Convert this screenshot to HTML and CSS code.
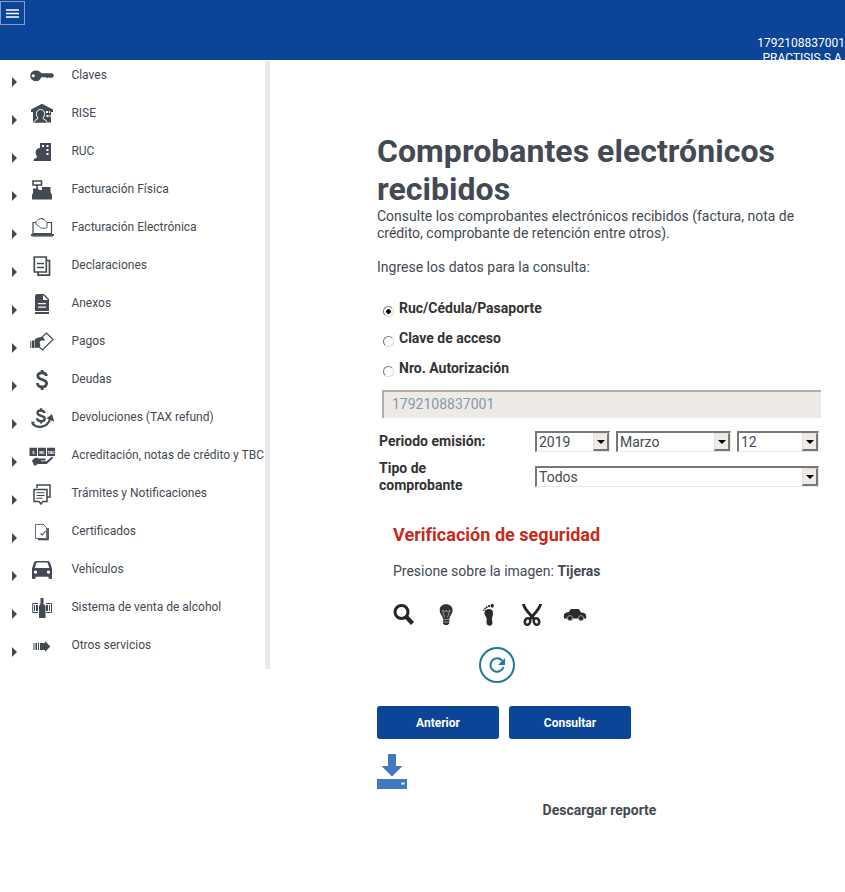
FILE: index.html
```html
<!DOCTYPE html>
<html lang="es">
<head>
<meta charset="utf-8">
<title>Comprobantes electrónicos recibidos</title>
<link rel="stylesheet" href="styles.css">
</head>
<body>
<header class="topbar">
  <button class="menu-button" aria-label="Menú"><svg width="13" height="9" viewBox="0 0 13 9"><path d="M0 1h13M0 4.500h13M0 8h13" stroke="#fff" stroke-width="1.500"/></svg></button>
  <div class="account"><div>1792108837001</div><div class="company">PRACTISIS S.A.</div></div>
</header>
<div class="layout">
<nav class="sidebar">
  <a class="item"><i class="caret"></i><svg class="icon" viewBox="0 0 28 28"><path fill-rule="evenodd" d="M8 8.500c2.500 0 4.300 1 5.200 2.700H24.500l1.500 2.300-1.500 2.500-1.300-.8-1.200 1-1.300-1-1.300 1-1.400-1h-4.800C12.300 18 10.500 19.200 8 19.200c-3.500 0-5.700-2.400-5.700-5.400S4.500 8.500 8 8.500zM5.300 12.200a1.600 1.600 0 1 0 .01 0z"/></svg><span>Claves</span></a>
  <a class="item"><i class="caret"></i><svg class="icon" viewBox="0 0 28 28"><path d="M14 3.700 3 9.500v2.500h2V22.500h18V12h2V9.500z"/><path d="M6 22.500c0-3 4-2.500 4-4.500-3.500-4.500-1-8.500 2.500-8.500s6 4 2.500 8.500c0 2 4 1.500 4 4.500" stroke="#fff" fill="#434a54"/><path d="M18 11h2v2h-2zM21 11h1v2h-1zM18.500 15h2v2h-2zM21.500 15h1v2h-1z" fill="#fff"/></svg><span>RISE</span></a>
  <a class="item"><i class="caret"></i><svg class="icon" viewBox="0 0 28 28"><path d="M12 5h11v18H12z"/><path d="M14 7h2v2h-2zM18.500 7h2v2h-2zM18.500 11h2v2h-2zM18.500 15h2v2h-2z" fill="#fff"/><path d="M5.500 23c0-3 3.500-2.500 3.500-4.500-3-4-.5-8.500 2.500-8.500s5.500 4.500 2.500 8.500c0 2 5 1.500 5 4.500z"/></svg><span>RUC</span></a>
  <a class="item"><i class="caret"></i><svg class="icon" viewBox="0 0 28 28"><path d="M5 5h8.500v4H5zM9 9v4" fill="none" stroke="#434a54" stroke-width="1.600"/><path d="M5 12.500h5L11 14h3v-3h8.500v5l1.500 3v4.500H4V19l1-2z"/></svg><span>Facturación Física</span></a>
  <a class="item"><i class="caret"></i><svg class="icon" viewBox="0 0 28 28"><path d="M8 8.500H5V19.500h18.500v-11H19" fill="none" stroke="#434a54" stroke-width="1.200"/><path d="M8 10c-1-3 3-6 7-5.500l4 4v5c0 1-6 1-7 0-1-2-3-2-4-3.500zM13 4.500l3 1" fill="#fff" stroke="#434a54" stroke-width=".9"/><path d="M3 20h23v1.500L24 23H5l-2-1.500z"/><path d="M4 22.300h21" stroke="#a3a7ac"/></svg><span>Facturación Electrónica</span></a>
  <a class="item"><i class="caret"></i><svg class="icon" viewBox="0 0 28 28"><g fill="none" stroke="#434a54" stroke-width="1.700"><path d="M6.300 5h12v15h-12zM9 11.500h7M9 15.500h7"/><path d="M19 8.500h2.500V23.200H10V20"/></g></svg><span>Declaraciones</span></a>
  <a class="item"><i class="caret"></i><svg class="icon" viewBox="0 0 28 28"><path d="M8.500 4H16l5 5v12H7V5.500z"/><path d="M15 5v5h5M10 13h8v1.300h-8zM10 16.500h8v1.300h-8z" fill="#fff"/><path d="M7 22h14v2H7z"/></svg><span>Anexos</span></a>
  <a class="item"><i class="caret"></i><svg class="icon" viewBox="0 0 28 28"><path d="m12 11 6.500-6 6.500 6.500L14.500 22l-4.500-4" fill="none" stroke="#434a54" stroke-width="1.200"/><path d="M2.300 13h1v7h-1zM4 12.500h2V20H4zM6.500 12c2-2.500 4.500-3 7-2.700 2.200 0 3.500 1.500 3 3.700-2-.8-4-.5-4.700 1-.5 2 1.500 3 .2 4.700-1.500 1.300-3.500.8-5.500 1.300z"/></svg><span>Pagos</span></a>
  <a class="item"><i class="caret"></i><svg class="icon" viewBox="0 0 28 28"><path d="M18.300 10c0-2-1.800-3.200-4.200-3.200-2.600 0-4.300 1.200-4.300 3.200 0 4.600 8.800 2.800 8.800 7.300 0 2.300-1.800 3.700-4.500 3.700s-4.700-1.500-4.700-3.900M14.100 4v3.500M14.100 20.500V24" fill="none" stroke="#434a54" stroke-width="2.800"/></svg><span>Deudas</span></a>
  <a class="item"><i class="caret"></i><svg class="icon" viewBox="0 0 28 28"><path d="M16.400 9c0-1.600-1.500-2.500-3.500-2.500S9.500 7.400 9.500 9c0 3.600 7.200 2 7.200 5.400 0 1.700-1.500 2.700-3.700 2.700s-3.800-1.100-3.800-2.900M13 4.200v2.500M13 17v2.500" fill="none" stroke="#434a54" stroke-width="2.400"/><path d="M4 19c5 6 15.500 5.500 18.500-5" fill="none" stroke="#434a54" stroke-width="2.200"/><path d="m18.500 14.500 5.500-4.500 2.200 7.500zM3 17.500l4 .5-2.500 3z"/></svg><span>Devoluciones (TAX refund)</span></a>
  <a class="item"><i class="caret"></i><svg class="icon" viewBox="0 0 28 28"><path d="M1.500 5.700H9v8.300H1.500zM10 5.700h8v8.300h-8zM19 5.700h8v8.300h-8z"/><path d="M4 19c2-3.500 4.500-3.700 7-2.500h6c1.500.3 1 2-.5 2H13v.7h5.500l5-4.200c1.200-.6 2 .5 1.200 1.500l-6 5.500H10L6.500 24z"/><g class="tiny"><text x="4.200" y="11.500">$</text><text x="11.300" y="11.500">NC</text><text x="19.300" y="11.500">TBC</text></g></svg><span>Acreditación, notas de crédito y TBC</span></a>
  <a class="item"><i class="caret"></i><svg class="icon" viewBox="0 0 28 28"><g fill="none" stroke="#434a54" stroke-width="1.500"><path d="M9 8V5h13v12h-2.500M6 9.500h13v12h-4l-2 2.500-2-2.500H6z"/><path d="M8.500 12.700h8M8.500 15.500h8M8.500 18.200h6" stroke-width="1"/></g></svg><span>Trámites y Notificaciones</span></a>
  <a class="item"><i class="caret"></i><svg class="icon" viewBox="0 0 28 28"><g fill="none" stroke="#434a54"><path d="M7.500 6.500h8l3 3v11h-11z" stroke-width=".8"/><path d="M20 10v11.500H10" stroke-width="1.700"/><path d="m12.500 15.500 1.700 1.500 3.300-4" stroke-width="1.100"/></g></svg><span>Certificados</span></a>
  <a class="item"><i class="caret"></i><svg class="icon" viewBox="0 0 28 28"><path fill-rule="evenodd" d="M8 5h12q1.500 0 2 1.500l2 6V22q0 1-1 1h-1.500q-1 0-1-1v-1.200h-13V22q0 1-1 1H5q-1 0-1-1v-9.500l2-6Q6.500 5 8 5zm.5 1.500L6.700 12h14.600l-1.800-5.500zM7.500 14.500a1.600 1.600 0 1 0 .01 0zm13 0a1.600 1.600 0 1 0 .01 0z"/></svg><span>Vehículos</span></a>
  <a class="item"><i class="caret"></i><svg class="icon" viewBox="0 0 28 28"><path d="M10 9.500H4.700v9H10M18 9.500h5.500v9H18" fill="none" stroke="#434a54"/><path d="M6 11h1v6H6zM8 11h2v6H8zM18 11h2v6h-2zM21 11h1v6h-1zM12.500 4h3v6l2 2v12H11V12l1.500-2z"/></svg><span>Sistema de venta de alcohol</span></a>
  <a class="item"><i class="caret"></i><svg class="icon" viewBox="0 0 28 28"><path d="M5.500 11h1v7h-1zM7.500 11h1.500v7H7.500zM10 11h1v7h-1zM12 11h5V9l5.300 5.500L17 20v-2h-5z"/></svg><span>Otros servicios</span></a>
</nav>
<main class="content">
  <h1>Comprobantes electrónicos recibidos</h1>
  <p class="intro">Consulte los comprobantes electrónicos recibidos (factura, nota de crédito, comprobante de retención entre otros).</p>
  <p class="prompt">Ingrese los datos para la consulta:</p>
  <div class="radios">
    <div class="choice"><i class="radio checked"></i><b>Ruc/Cédula/Pasaporte</b></div>
    <div class="choice"><i class="radio"></i><b>Clave de acceso</b></div>
    <div class="choice"><i class="radio"></i><b>Nro. Autorización</b></div>
  </div>
  <div class="identifier">1792108837001</div>
  <div class="filter period"><b>Periodo emisión:</b>
    <div class="select year">2019<i class="arrow"></i></div><div class="select month">Marzo<i class="arrow"></i></div><div class="select day">12<i class="arrow"></i></div>
  </div>
  <div class="filter kind"><b>Tipo de comprobante</b><div class="select type">Todos<i class="arrow"></i></div></div>
  <section class="captcha">
    <h2>Verificación de seguridad</h2>
    <p>Presione sobre la imagen: <b>Tijeras</b></p>
    <div class="pictures">
      <svg viewBox="0 0 24 24"><circle cx="8.500" cy="9" r="6.500" fill="none" stroke="#262626" stroke-width="3"/><path d="m13 13.500 6.500 7" stroke="#262626" stroke-width="4.200"/></svg>
      <svg viewBox="0 0 24 24"><path d="M12 1.200c4 0 6.600 2.500 6.600 6 0 3.300-2.400 5-3.300 8.300v5L13.500 22h-3L9 20.500v-5c-.9-3.300-3.300-5-3.300-8.300 0-3.500 2.300-6 6.300-6z" fill="#333"/><path d="m8.500 7 2 2L12 7l1.500 2L16 7l-2.500 7.500M10.500 14.500 8.500 7M9 16.500h6M9 19h6" stroke="#aaa" stroke-width=".8" fill="none"/></svg>
      <svg viewBox="0 0 24 24"><path d="M7.500 9c1-4 8-4 8.500 0 .5 3.500-1.500 5-1 8 .8 3 .7 5.700-2.500 5.700-3 0-3.300-3-2.800-5.700C10 13.500 7 12.500 7.500 9z" fill="#2b2b2b"/><g fill="#2b2b2b"><ellipse cx="15.200" cy="2.800" rx="1.700" ry="2"/><circle cx="12" cy="3.200" r="1.100"/><circle cx="9.800" cy="4.200" r="1"/><circle cx="8" cy="5.500" r=".9"/><circle cx="6.700" cy="7.200" r=".8"/></g></svg>
      <svg viewBox="0 0 24 24"><path d="M3.500 1c0 4 5.500 9 10.500 15M20.500 1c0 4-5.500 9-10.500 15" fill="none" stroke="#262626" stroke-width="2.900"/><g fill="none" stroke="#262626" stroke-width="2.500"><ellipse cx="7.500" cy="18.500" rx="2.700" ry="3.300" transform="rotate(20 7.500 18.500)"/><ellipse cx="16.500" cy="18.500" rx="2.700" ry="3.300" transform="rotate(-20 16.500 18.500)"/></g></svg>
      <svg viewBox="0 0 24 24"><path d="M.8 13.500c0-3.500 2-4 5-4.500l2-3h8l2.200 3.500c3.500 0 5.200 1 5.200 4v2H1z" fill="#2b2b2b"/><g fill="#2b2b2b" stroke="#ddd" stroke-width=".6"><circle cx="7" cy="15.200" r="2.600"/><circle cx="18" cy="15.200" r="2.600"/></g></svg>
    </div>
    <svg class="refresh" viewBox="0 0 36 36"><g fill="none" stroke="#21789a" stroke-width="2"><circle cx="18" cy="18" r="17"/><path d="M23.500 14a6.700 6.700 0 1 0 1 6"/></g><path d="M26 11v7h-7z" fill="#21789a"/></svg>
  </section>
  <div class="buttons"><button>Anterior</button><button>Consultar</button></div>
  <svg class="download" viewBox="0 0 30 35"><path fill="#4278bd" fill-rule="evenodd" d="M11 0h8v12h6.500L15 22.500 4.500 12H11zM0 25h30v10H0zm24.500 3.500v2h3v-2z"/></svg>
  <div class="report">Descargar reporte</div>
</main>
</div>
</body>
</html>
```
FILE: styles.css
```css
* { box-sizing: border-box; }
body { margin: 0; height: 892px; overflow: hidden; background: #fff; color: #434a54; font: 14px/17px Roboto, "Liberation Sans", sans-serif; }
h1, h2, p { margin: 0; }
.topbar { height: 60px; background: #0c4497; display: flex; justify-content: space-between; align-items: flex-start; overflow: hidden; color: #fff; }
.menu-button { width: 25px; height: 24px; margin-top: 1px; padding: 0; display: grid; place-items: center; border: 1px solid #859fc9; background: none; }
.account { margin-top: 36px; text-align: right; font-size: 12px; line-height: 15px; }
.layout { display: flex; align-items: flex-start; }
.sidebar { width: 270px; height: 608px; margin-top: 1px; border-right: 5px solid #e6e9ee; }
.item { display: flex; align-items: flex-start; height: 38px; padding-left: 12px; color: #434a54; font-size: 12px; line-height: 28px; white-space: nowrap; }
.item span { margin-left: 15.4px; }
.caret { width: 0; height: 0; margin-top: 16px; border-style: solid; border-width: 5px 0 5px 5px; border-color: transparent transparent transparent #434a54; }
.icon { flex: none; width: 28px; height: 28px; margin: 1px 0 0 11px; fill: #434a54; }
.tiny { fill: #fff; font: bold 4px Roboto, sans-serif; }
.content { width: 444px; margin: 72px 0 0 107px; }
h1 { font-size: 32px; line-height: 38px; font-weight: 700; letter-spacing: .04px; }
.prompt { margin-top: 17px; }
.radios { margin-top: 17px; color: #333; }
.choice { display: flex; align-items: flex-start; height: 30px; padding: 7px 0 0 6px; }
.radio { width: 11px; height: 11px; margin: 6px 5px 0 0; border: 1px solid; border-color: #777 #ddd #ddd #777; border-radius: 50%; background: #fff; }
.checked { background: radial-gradient(circle, #000 2px, #fff 2.6px); }
.identifier { width: 439px; height: 28px; margin: 7px 0 0 5px; padding: 4px 8px; border-style: solid; border-width: 2px 0 0 2px; border-color: #b5aca5; background: #eeebe7; color: #8797ac; }
.filter { display: flex; padding-left: 2px; color: #333; }
.filter b { width: 156px; }
.period { margin-top: 13px; }
.period b { padding-top: 2px; }
.kind { margin-top: 8px; }
.kind b { padding-right: 60px; }
.kind .select { margin-top: 6px; }
.select { display: flex; justify-content: space-between; height: 21px; padding-left: 2px; border: 2px solid; border-width: 2px 1px 1px 2px; border-color: #777 #ece9e4 #ece9e4 #777; color: #434a54; line-height: 18px; background: #fff; }
.year { width: 75px; margin-right: 6px; }
.month { width: 115px; margin-right: 6px; }
.day { width: 82px; }
.type { width: 284px; }
.arrow { width: 16px; height: 18px; display: grid; place-items: center; border: 1px solid; border-width: 1px 2px 2px 1px; border-color: #e4e0da #777 #777 #e4e0da; background: #eeebe7; }
.arrow::before { content: ""; border: 4px solid transparent; border-top-color: #000; border-bottom: 0; }
.captcha { display: flex; flex-direction: column; margin: 30px 0 0 16px; }
h2 { color: #c72a1b; font-size: 18px; line-height: 21px; letter-spacing: .03px; }
.captcha p { margin-top: 18px; }
.pictures { display: flex; gap: 19px; margin-top: 23px; }
.pictures svg { width: 24px; height: 24px; }
.pictures svg:first-child { margin-right: -2px; }
.refresh { width: 36px; height: 36px; margin: 20px 0 0 86px; }
.buttons { display: flex; gap: 10px; margin-top: 23px; }
.buttons button { width: 122px; height: 33px; border: 0; border-radius: 3px; background: #0c4497; color: #fff; font: bold 12px Roboto, sans-serif; }
.download { display: block; width: 30px; height: 35px; margin-top: 15px; }
.report { margin-top: 13px; padding-left: 1px; text-align: center; font-weight: 700; }
```
